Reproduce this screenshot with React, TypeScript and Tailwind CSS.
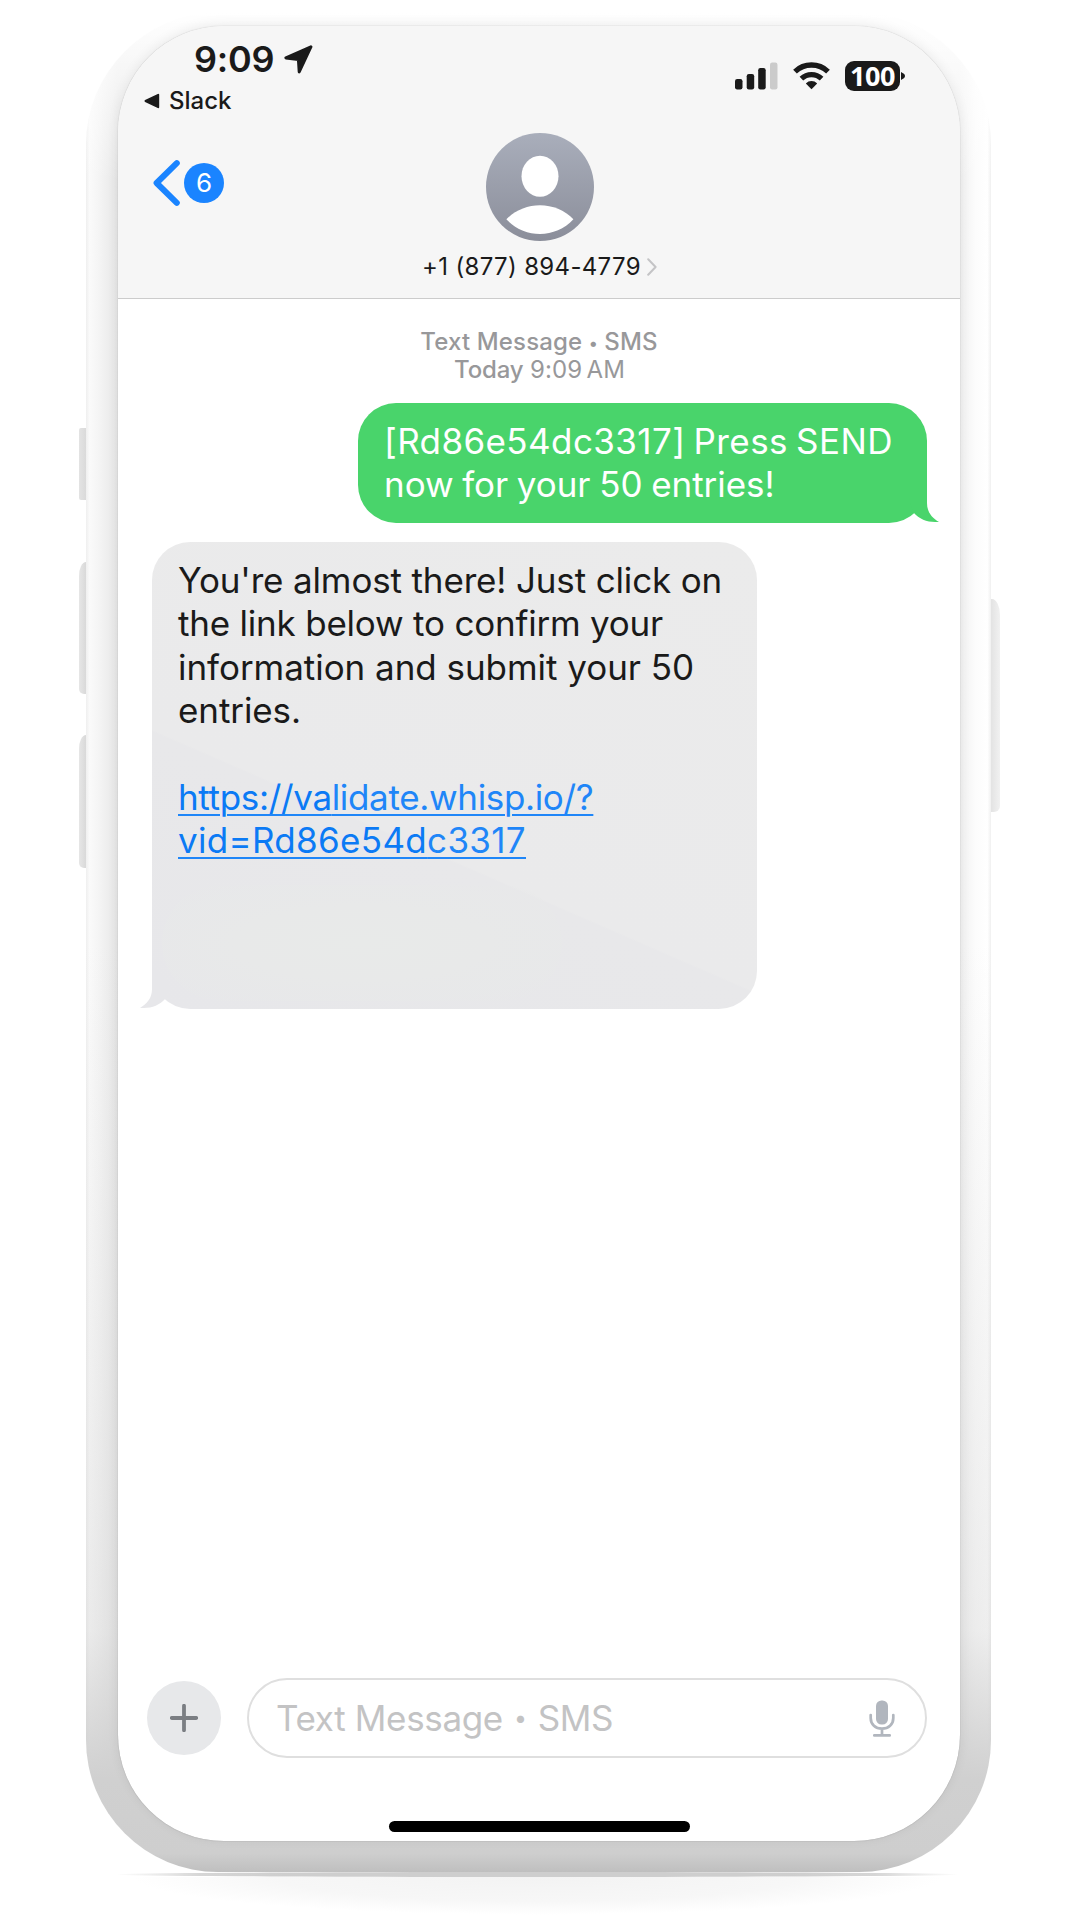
import type { ReactNode } from "react";

function BubbleTail({ className }: { className: string }) {
  return (
    <svg viewBox="0 0 54 44" className={className} aria-hidden="true">
      <path d="M42 0V24C42 33 47 39 54 42.9C44 44 35 41 28.5 33.6L24 20Z" fill="currentColor" />
    </svg>
  );
}

function StatusBar() {
  return (
    <div className="flex h-[94px] justify-between pr-[55px]">
      <div className="flex flex-col pt-[13px]">
        <div className="flex items-center pl-[76px]">
          <span className="text-[36px] font-semibold leading-[40px] tracking-[-0.25px]">9:09</span>
          <svg viewBox="0 0 29 29" className="ml-[10px] mt-px h-[29px] w-[29px]" aria-hidden="true">
            <path d="M26.9 1.8L1.9 12.9L14.4 14.4L15.2 26.9Z" fill="#1a1a1a" stroke="#1a1a1a" strokeWidth="3" strokeLinejoin="round" />
          </svg>
        </div>
        <div className="mt-[8px] flex items-center pl-[26px]">
          <svg viewBox="0 0 16 16" className="h-4 w-4" aria-hidden="true">
            <path d="M1.5 8L14.2 1.8V14.2Z" fill="#1a1a1a" stroke="#1a1a1a" strokeWidth="2" strokeLinejoin="round" />
          </svg>
          <span className="ml-[9px] text-[24px] font-medium leading-[28px]">Slack</span>
        </div>
      </div>
      <div className="flex items-start pt-[35px]">
        <svg viewBox="0 0 43 28" className="mt-px h-[28px] w-[43px]" aria-hidden="true">
          <rect x="0" y="17" width="7.5" height="10.5" rx="2.2" fill="#1a1a1a" />
          <rect x="11.7" y="12" width="7.5" height="15.5" rx="2.2" fill="#1a1a1a" />
          <rect x="23.2" y="6" width="7.5" height="21.5" rx="2.2" fill="#1a1a1a" />
          <rect x="35" y="0.5" width="7.5" height="27" rx="2.2" fill="#cbcbcb" />
        </svg>
        <svg viewBox="0 0 37 28" className="ml-[15px] mt-px h-[28px] w-[37px]" aria-hidden="true">
          <g fill="none" stroke="#1a1a1a">
            <path d="M2 9.6A24 24 0 0 1 35 9.6" strokeWidth="5.4" />
            <path d="M8.4 16.6A14.6 14.6 0 0 1 28.6 16.6" strokeWidth="5.2" />
          </g>
          <path d="M12.8 21.4A8.2 8.2 0 0 1 24.2 21.4L18.5 27.2Z" fill="#1a1a1a" />
        </svg>
        <div className="ml-[15px] flex h-[30px] w-[55px] items-center justify-center rounded-[9px] bg-[#1a1a1a]">
          <span className="font-['Open_Sans'] text-[27px] font-bold leading-[30px] tracking-[-0.5px] text-white">100</span>
        </div>
        <svg viewBox="0 0 5 10" className="ml-px mt-[10px] h-[10px] w-[4px]" aria-hidden="true">
          <path d="M0 0C3 1.5 5 3 5 5S3 8.5 0 10Z" fill="#1a1a1a" />
        </svg>
      </div>
    </div>
  );
}

function ContactHeader() {
  return (
    <div>
      <div className="grid h-[126px] grid-cols-3">
        <div className="flex items-start pl-[35px] pt-[40px]">
          <svg viewBox="0 0 27 46" className="h-[46px] w-[27px]" aria-hidden="true">
            <path d="M23.8 3.2L3.6 23L23.8 42.8" fill="none" stroke="#1a84ff" strokeWidth="6" strokeLinecap="round" strokeLinejoin="round" />
          </svg>
          <span className="ml-[4px] mt-[3px] flex h-[40px] w-[40px] items-center justify-center rounded-full bg-[#1a84ff] text-[26px] leading-[40px] text-white">
            6
          </span>
        </div>
        <div className="flex justify-center pl-[2px] pt-[12.5px]">
          <svg viewBox="0 0 108 108" className="h-[108px] w-[108px]" aria-hidden="true">
            <defs>
              <linearGradient id="avatar" x1="0" y1="0" x2="0" y2="1">
                <stop offset="0" stopColor="#a9aebb" />
                <stop offset="1" stopColor="#8b8e9a" />
              </linearGradient>
            </defs>
            <circle cx="54" cy="54" r="54" fill="url(#avatar)" />
            <ellipse cx="54" cy="43.2" rx="18.5" ry="20.5" fill="#fff" />
            <path d="M20.4 86.3C38 67.4 70 67.4 87.4 86.3C69.5 105.8 38.5 105.8 20.4 86.3Z" fill="#fff" />
          </svg>
        </div>
      </div>
      <div className="flex items-center justify-center pl-[1px] pt-[6.5px]">
        <span className="text-[24px] leading-[28px] tracking-[0.33px]">+1 (877) 894-4779</span>
        <svg viewBox="0 0 10 18" className="ml-[6px] mt-px h-[18px] w-[10px]" aria-hidden="true">
          <path d="M1.2 1.2L8.6 9L1.2 16.8" fill="none" stroke="#c4c4c6" strokeWidth="2" strokeLinecap="round" strokeLinejoin="round" />
        </svg>
      </div>
    </div>
  );
}

function OutgoingBubble() {
  return (
    <div className="relative ml-[240px] h-[120px] w-[569px] rounded-[38px] bg-[#49d46b] pl-[26px] pt-[17px] text-[35px] leading-[43.4px] text-white">
      <p className="tracking-[0.4px] [word-spacing:-2px]">[Rd86e54dc3317] Press SEND</p>
      <p className="tracking-[-0.05px] [word-spacing:-1.1px]">now for your 50 entries!</p>
      <BubbleTail className="absolute bottom-0 right-[-12px] h-[44px] w-[54px] text-[#49d46b]" />
    </div>
  );
}

function LinkLine({ children, className }: { children: ReactNode; className: string }) {
  return (
    <p className={className}>
      <span className="underline decoration-2 underline-offset-[4px]">{children}</span>
    </p>
  );
}

function IncomingBubble() {
  return (
    <div className="relative ml-[34px] mt-[19px] h-[467px] w-[605px] rounded-[38px] bg-[linear-gradient(23.5deg,#e7e7ea_0%,#e8e8ea_38%,#eaeaeb_38.3%,#ebebeb_100%)] pl-[26px] pt-[17px] text-[35px] leading-[43.4px]">
      <p className="tracking-[-0.15px]">You're almost there! Just click on</p>
      <p className="tracking-[-0.21px]">the link below to confirm your</p>
      <p className="tracking-[-0.04px]">information and submit your 50</p>
      <p className="tracking-[-0.09px]">entries.</p>
      <p>&nbsp;</p>
      <LinkLine className="tracking-[-0.34px] text-[#1f86f8]">
        <span className="text-[#0b7af5]">https://va</span>lidate.whisp.io/?
      </LinkLine>
      <LinkLine className="tracking-[0.32px] text-[#1f86f8]">
        <span className="text-[#0b7af5]">vid=Rd86e54d</span>c3317
      </LinkLine>
      <div className="ml-[-16px] mt-[22px] h-[116px] w-[400px] rounded-full bg-[radial-gradient(ellipse_at_center,#e8eae9_0%,#e8e9e9_45%,#e8e8ea00_100%)]" />
      <BubbleTail className="absolute bottom-0 left-[-12px] h-[44px] w-[54px] scale-x-[-1] text-[#e7e7ea]" />
    </div>
  );
}

function Composer() {
  return (
    <div className="flex items-center pl-[29px]">
      <div className="flex h-[74px] w-[74px] items-center justify-center rounded-full bg-[#e7e8ea]">
        <svg viewBox="0 0 28 28" className="h-[28px] w-[28px]" aria-hidden="true">
          <path d="M14 1.8V26.2M1.8 14H26.2" stroke="#7b7e83" strokeWidth="3.8" strokeLinecap="round" />
        </svg>
      </div>
      <div className="ml-[26px] flex h-[80px] w-[680px] items-center justify-between rounded-full border-2 border-[#dfdfdf] pl-[27px] pr-[30px]">
        <div className="flex items-center text-[35px] leading-[44px] text-[#c3c3c4]">
          <span className="tracking-[-0.35px]">Text Message</span>
          <span className="w-[35px] text-center text-[23px]">•</span>
          <span className="tracking-[-0.5px]">SMS</span>
        </div>
        <svg viewBox="0 0 26 38" className="mt-px h-[38px] w-[26px]" aria-hidden="true">
          <rect x="7" y="0.5" width="12" height="24" rx="5.5" fill="#b1b6be" />
          <path d="M1.7 15V18C1.7 24.5 6.5 28.6 13 28.6S24.3 24.5 24.3 18V15M13 28.6V35.2M5.3 35.4H20.7" fill="none" stroke="#b1b6be" strokeWidth="2.7" strokeLinecap="round" />
        </svg>
      </div>
    </div>
  );
}

function Screen() {
  return (
    <div className="flex h-[1815px] w-[842px] flex-col overflow-hidden rounded-[106px] bg-white text-[#1a1a1a] shadow-[0_0_1px_0_rgba(0,0,0,0.35),0_-2px_12px_rgba(0,0,0,0.07)]">
      <header className="h-[273px] border-b border-[#cccccc] bg-[#f6f6f6]">
        <StatusBar />
        <ContactHeader />
      </header>
      <main className="flex flex-1 flex-col">
        <div className="pt-[29px] text-center text-[24px] leading-[28px] text-[#98989a]">
          <p className="font-medium tracking-[0.15px]">
            Text Message <span className="inline-block w-[9px] align-[1px] text-[17px] leading-none">•</span> SMS
          </p>
          <p className="pl-px tracking-[0.05px]">
            <span className="font-medium tracking-[-0.2px]">Today</span> 9:09{"\u2009"}AM
          </p>
        </div>
        <div className="mt-[19px]">
          <OutgoingBubble />
          <IncomingBubble />
        </div>
      </main>
      <footer className="flex h-[163px] flex-col">
        <Composer />
        <div className="ml-[271px] mt-[63px] h-[11px] w-[301px] rounded-full bg-black" />
      </footer>
    </div>
  );
}

export default function App() {
  return (
    <div className="h-[1920px] w-[1080px] overflow-hidden bg-white pt-[13px] font-[Inter,sans-serif]">
      <div className="flex pl-[79px]">
        <div className="flex w-[7px] flex-col pt-[415px]">
          <div className="h-[72px] rounded-l-[2px] bg-gradient-to-r from-[#e3e3e3] to-[#dadada]" />
          <div className="mt-[62px] h-[132px] rounded-bl-[5px] rounded-tl-[7px_14px] bg-gradient-to-r from-[#e6e6e6] to-[#d9d9d9]" />
          <div className="mt-[41px] h-[133px] rounded-bl-[5px] rounded-tl-[7px_14px] bg-gradient-to-r from-[#e6e6e6] to-[#d9d9d9]" />
        </div>
        <div className="h-[1859px] w-[905px] rounded-[132px] bg-[linear-gradient(to_bottom,#ffffff_0%,#ffffff00_9%,#cccccc00_50%,#cccccc55_87%,#d0d0d0_95%,#cecece_99%,#bfbfbf_100%),linear-gradient(to_right,#efefef_0%,#fafafa_0.4%,#f4f4f4_1.5%,#e6e6e6_3.5%,#f0f0f0_96.5%,#fcfcfc_98.3%,#ffffff_99.6%,#f0f0f0_100%)] pl-[32px] pt-[13px]">
          <Screen />
        </div>
        <div className="w-[9px] pt-[586px]">
          <div className="h-[213px] rounded-br-[6px] rounded-tr-[8px_16px] bg-gradient-to-r from-[#e3e3e3] to-[#f1f1f1]" />
        </div>
      </div>
      <div className="ml-[115px] h-[5px] w-[845px] rounded-[50%] bg-[linear-gradient(to_right,#ffffff,#d6d6d6_10%,#cecece_20%,#cecece_80%,#d6d6d6_90%,#ffffff)]" />
      <div className="ml-[130px] h-[38px] w-[815px] bg-[radial-gradient(ellipse_at_top,#f3f3f3_0%,#f7f7f7_45%,#ffffff00_70%)]" />
    </div>
  );
}
